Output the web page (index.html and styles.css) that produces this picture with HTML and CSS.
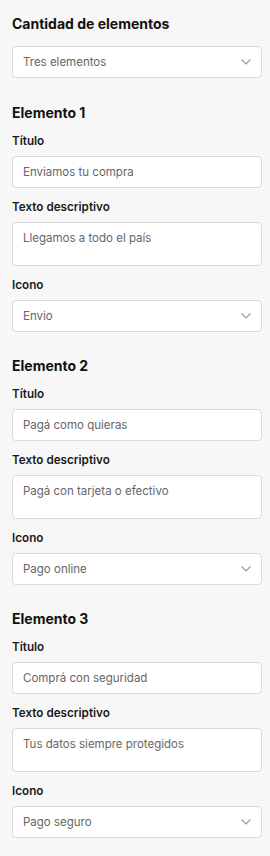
FILE: index.html
```html
<!DOCTYPE html>
<html lang="es">
<head>
    <meta charset="UTF-8">
    <meta name="viewport" content="width=device-width, initial-scale=1.0">
    <title>Elementos</title>
    <link rel="stylesheet" href="styles.css">
</head>
<body>
    <h2 class="title">Cantidad de elementos</h2>
    <div class="box select count-select">
        <span>Tres elementos</span>
        <svg class="chevron" width="10" height="6" viewBox="0 0 10 6"><path d="M0.5 0.5 L5 5 L9.5 0.5" fill="none" stroke="#9a9a9a" stroke-width="1.2"/></svg>
    </div>

    <div class="section">
        <h3 class="title section-title">Elemento 1</h3>
        <label class="label">Título</label>
        <div class="box">Enviamos tu compra</div>
        <label class="label">Texto descriptivo</label>
        <div class="box area">Llegamos a todo el país</div>
        <label class="label">Icono</label>
        <div class="box select">
            <span>Envio</span>
            <svg class="chevron" width="10" height="6" viewBox="0 0 10 6"><path d="M0.5 0.5 L5 5 L9.5 0.5" fill="none" stroke="#9a9a9a" stroke-width="1.2"/></svg>
        </div>
    </div>

    <div class="section">
        <h3 class="title section-title">Elemento 2</h3>
        <label class="label">Título</label>
        <div class="box">Pagá como quieras</div>
        <label class="label">Texto descriptivo</label>
        <div class="box area">Pagá con tarjeta o efectivo</div>
        <label class="label">Icono</label>
        <div class="box select">
            <span>Pago online</span>
            <svg class="chevron" width="10" height="6" viewBox="0 0 10 6"><path d="M0.5 0.5 L5 5 L9.5 0.5" fill="none" stroke="#9a9a9a" stroke-width="1.2"/></svg>
        </div>
    </div>

    <div class="section">
        <h3 class="title section-title">Elemento 3</h3>
        <label class="label">Título</label>
        <div class="box">Comprá con seguridad</div>
        <label class="label">Texto descriptivo</label>
        <div class="box area">Tus datos siempre protegidos</div>
        <label class="label">Icono</label>
        <div class="box select">
            <span>Pago seguro</span>
            <svg class="chevron" width="10" height="6" viewBox="0 0 10 6"><path d="M0.5 0.5 L5 5 L9.5 0.5" fill="none" stroke="#9a9a9a" stroke-width="1.2"/></svg>
        </div>
    </div>
</body>
</html>
```

FILE: styles.css
```css
body {
    font-family: Inter, "Noto Sans", sans-serif;
    margin: 0;
    padding: 14px 8px 20px 12px;
    background-color: #f7f7f7;
    color: #111;
}
.title {
    font-size: 14px;
    font-weight: 700;
    line-height: 20px;
    margin: 0 0 12px;
}
.section-title {
    margin: 24px 0 9px;
}
.count-select + .section .section-title {
    margin-top: 25px;
}
.label {
    display: block;
    font-size: 11.7px;
    font-weight: 600;
    line-height: 18px;
    color: #1a1a1a;
    margin: 10px 0 6px;
}
.section-title + .label {
    margin-top: 9px;
}
.box {
    box-sizing: border-box;
    height: 32px;
    padding: 0 10px;
    background-color: #fff;
    border: 1px solid #dadada;
    border-radius: 4px;
    font-size: 11.5px;
    line-height: 30px;
    color: #666;
}
.area {
    height: 44px;
    line-height: 18px;
    padding-top: 6px;
}
.select {
    display: flex;
    align-items: center;
    justify-content: space-between;
}
```
